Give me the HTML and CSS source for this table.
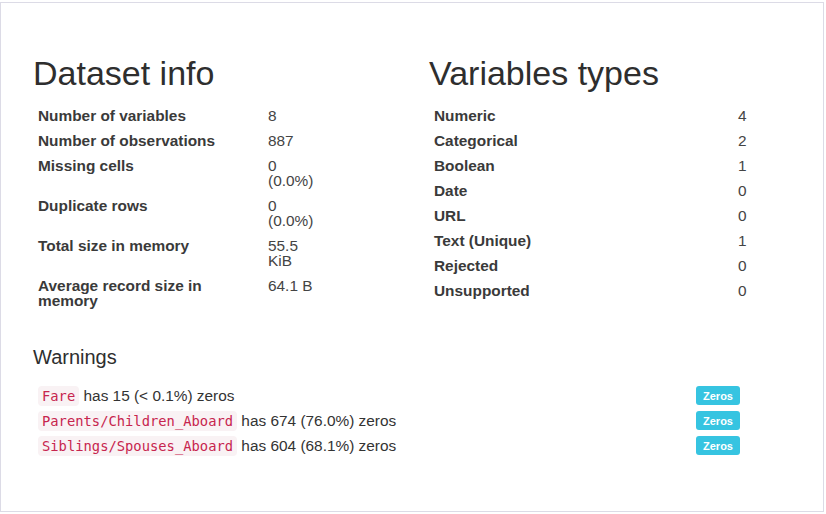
FILE: index.html
```html
<!DOCTYPE html>
<html lang="en">
<head>
<meta charset="utf-8">
<title>Overview</title>
<link rel="stylesheet" href="styles.css">
</head>
<body>
<div class="frame">
  <div class="cols">
    <section class="col">
      <h1>Dataset info</h1>
      <table class="stats left">
        <tr><th>Number of variables</th><td>8</td></tr>
        <tr><th>Number of observations</th><td>887</td></tr>
        <tr><th>Missing cells</th><td>0<br>(0.0%)</td></tr>
        <tr><th>Duplicate rows</th><td>0<br>(0.0%)</td></tr>
        <tr><th>Total size in memory</th><td>55.5<br>KiB</td></tr>
        <tr><th>Average record size in<br>memory</th><td>64.1 B</td></tr>
      </table>
    </section>
    <section class="col">
      <h1>Variables types</h1>
      <table class="stats right">
        <tr><th>Numeric</th><td>4</td></tr>
        <tr><th>Categorical</th><td>2</td></tr>
        <tr><th>Boolean</th><td>1</td></tr>
        <tr><th>Date</th><td>0</td></tr>
        <tr><th>URL</th><td>0</td></tr>
        <tr><th>Text (Unique)</th><td>1</td></tr>
        <tr><th>Rejected</th><td>0</td></tr>
        <tr><th>Unsupported</th><td>0</td></tr>
      </table>
    </section>
  </div>
  <h2>Warnings</h2>
  <ul class="warnings">
    <li><span class="msg"><code>Fare</code> has 15 (&lt; 0.1%) zeros</span><span class="badge">Zeros</span></li>
    <li><span class="msg"><code>Parents/Children_Aboard</code> has 674 (76.0%) zeros</span><span class="badge">Zeros</span></li>
    <li><span class="msg"><code>Siblings/Spouses_Aboard</code> has 604 (68.1%) zeros</span><span class="badge">Zeros</span></li>
  </ul>
</div>
</body>
</html>
```

FILE: styles.css
```css
html, body {
  margin: 0;
  padding: 0;
  background: #ffffff;
}
body {
  font-family: "Liberation Sans", Arial, sans-serif;
  color: #333333;
  font-size: 15.4px;
}
.frame {
  box-sizing: border-box;
  margin-top: 2px;
  width: 824px;
  height: 510px;
  border: 1px solid #dcdbe6;
  padding: 52px 0 0 32px;
}
.cols {
  display: grid;
  grid-template-columns: 396px 396px;
}
h1 {
  margin: 0 0 11px 0;
  font-size: 34px;
  line-height: 37px;
  font-weight: normal;
  color: #2e2e2e;
}
.stats {
  border-collapse: collapse;
  border-spacing: 0;
}
.stats th, .stats td {
  padding: 5px;
  line-height: 15px;
  vertical-align: top;
  text-align: left;
}
.stats th {
  font-weight: bold;
  color: #3a3a3a;
}
.stats td {
  color: #444444;
}
.left th {
  width: 200px;
  padding-right: 25px;
}
.left td {
  width: 50px;
}
.right th {
  width: 294px;
}
h2 {
  margin: 33px 0 0 0;
  font-size: 20px;
  line-height: 22px;
  font-weight: normal;
  color: #2e2e2e;
}
.warnings {
  list-style: none;
  margin: 15px 0 0 0;
  padding: 0;
  width: 707px;
}
.warnings li {
  display: flex;
  justify-content: space-between;
  align-items: center;
  height: 25px;
}
.msg {
  padding-left: 5px;
  color: #333333;
}
code {
  font-family: "DejaVu Sans Mono", "Liberation Mono", monospace;
  font-size: 13.8px;
  color: #c7254e;
  background: #f9f2f4;
  border-radius: 4px;
  padding: 2px 4px;
}
.badge {
  display: inline-flex;
  align-items: center;
  justify-content: center;
  width: 44px;
  height: 19px;
  background: #36c4e1;
  color: #ffffff;
  font-size: 11px;
  font-weight: bold;
  border-radius: 3px;
}
```
